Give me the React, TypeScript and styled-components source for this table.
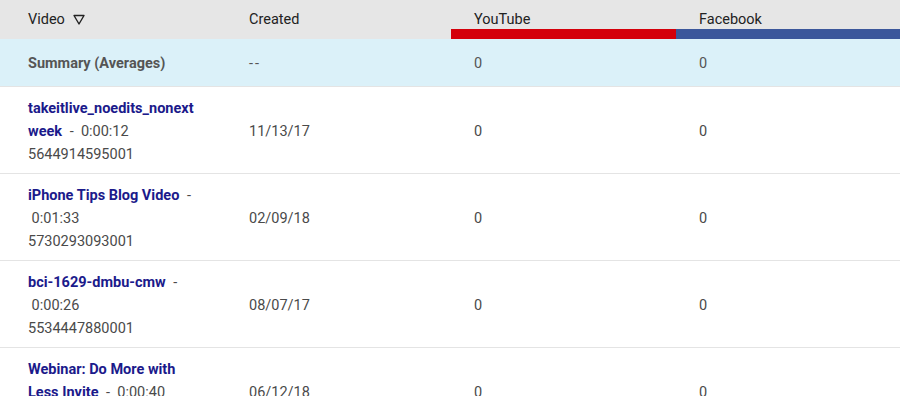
import styled, { createGlobalStyle } from "styled-components";

const GlobalStyle = createGlobalStyle`
  body {
    margin: 0;
    background: #fff;
    font-family: Roboto, "Liberation Sans", Arial, sans-serif;
    font-size: 14.5px;
    color: #444;
  }
`;

const Table = styled.div`
  width: 900px;
`;

const Row = styled.div<{ summary?: boolean }>`
  display: grid;
  grid-template-columns: 226px 225px 225px 1fr;
  background: ${(p) => (p.summary ? "#dbf1f9" : "#fff")};
  border-bottom: 1px solid #e4e4e4;
`;

const HeaderRow = styled.div`
  display: grid;
  grid-template-columns: 226px 225px 225px 1fr;
  height: 39px;
  background: #e6e6e6;
`;

const HeadCell = styled.div<{ bar?: string; first?: boolean }>`
  padding: 11px 0 0 ${(p) => (p.first ? "28px" : "23px")};
  line-height: 18px;
  color: #222;
  border-bottom: ${(p) => (p.bar ? `10px solid ${p.bar}` : "none")};
  display: flex;
  align-items: flex-start;
  gap: 8px;
`;

const Cell = styled.div<{ first?: boolean }>`
  padding: ${(p) => (p.first ? "10px 26px 7px 28px" : "2px 0 0 23px")};
  display: flex;
  align-items: center;
  line-height: 23px;
  color: #4a4a4a;
`;

const SummaryCell = styled.div<{ first?: boolean }>`
  height: 45px;
  padding: 2px 0 0 ${(p) => (p.first ? "28px" : "23px")};
  display: flex;
  align-items: center;
  color: #555;
  font-weight: ${(p) => (p.first ? 700 : 400)};
`;

const Dashes = styled.span`
  letter-spacing: 2px;
`;

const VideoInfo = styled.div`
  width: 100%;
`;

const Title = styled.a`
  color: #1b1a8b;
  font-weight: 700;
  text-decoration: none;
  margin-right: 4px;
`;

const Duration = styled.span`
  color: #4a4a4a;
`;

const VideoId = styled.div`
  color: #4a4a4a;
`;

const SortIcon = () => (
  <svg width="12" height="11" viewBox="0 0 12 11" style={{ marginTop: 3 }}>
    <path d="M1 1.5 H11 L6 10 Z" fill="none" stroke="#222" strokeWidth="1.4" strokeLinejoin="round" />
  </svg>
);

interface IVideo {
  title: React.ReactNode;
  duration: string;
  id: string;
  created: string;
  youtube: number;
  facebook: number;
}

const videos: IVideo[] = [
  {
    title: (
      <>
        takeitlive_noedits_nonext<wbr />week
      </>
    ),
    duration: "0:00:12",
    id: "5644914595001",
    created: "11/13/17",
    youtube: 0,
    facebook: 0,
  },
  {
    title: "iPhone Tips Blog Video",
    duration: "0:01:33",
    id: "5730293093001",
    created: "02/09/18",
    youtube: 0,
    facebook: 0,
  },
  {
    title: "bci-1629-dmbu-cmw",
    duration: "0:00:26",
    id: "5534447880001",
    created: "08/07/17",
    youtube: 0,
    facebook: 0,
  },
  {
    title: "Webinar: Do More with Less Invite",
    duration: "0:00:40",
    id: "5799311016001",
    created: "06/12/18",
    youtube: 0,
    facebook: 0,
  },
];

function App() {
  return (
    <>
      <GlobalStyle />
      <Table>
        <HeaderRow>
          <HeadCell first>
            Video <SortIcon />
          </HeadCell>
          <HeadCell>Created</HeadCell>
          <HeadCell bar="#d4000b">YouTube</HeadCell>
          <HeadCell bar="#3b579b">Facebook</HeadCell>
        </HeaderRow>
        <Row summary>
          <SummaryCell first>Summary (Averages)</SummaryCell>
          <SummaryCell>
            <Dashes>--</Dashes>
          </SummaryCell>
          <SummaryCell>0</SummaryCell>
          <SummaryCell>0</SummaryCell>
        </Row>
        {videos.map((v) => (
          <Row key={v.id}>
            <Cell first>
              <VideoInfo>
                <Title href="#">{v.title}</Title>
                <Duration> - {"\u00a0"}{v.duration}</Duration>
                <VideoId>{v.id}</VideoId>
              </VideoInfo>
            </Cell>
            <Cell>{v.created}</Cell>
            <Cell>{v.youtube}</Cell>
            <Cell>{v.facebook}</Cell>
          </Row>
        ))}
      </Table>
    </>
  );
}

export default App;
